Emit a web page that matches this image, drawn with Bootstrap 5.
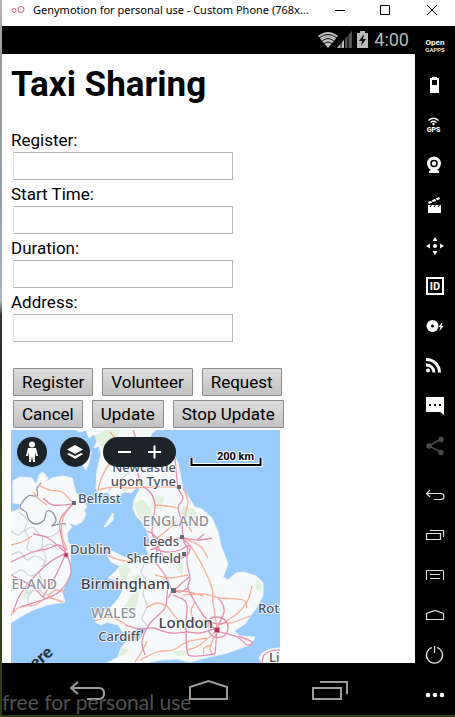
<!DOCTYPE html>
<html lang="en">
<head>
<meta charset="utf-8">
<meta name="viewport" content="width=device-width, initial-scale=1">
<title>Genymotion - Taxi Sharing</title>
<link href="https://cdn.jsdelivr.net/npm/bootstrap@5.3.0/dist/css/bootstrap.min.css" rel="stylesheet">
<style>
  body { font-family: Roboto, sans-serif; color: #000; background: linear-gradient(#b4b4b4 0, #999 8%, #8fa0ae 28%, #a9b6c2 42%, #333 44%, #222 58%, #3d4a18 64%, #2f3d12 100%); padding: 0 0 2px 2px; }
  svg { display: block; flex-shrink: 0; }
  .titlebar { height: 26px; font: 11px/20px "Noto Sans", sans-serif; padding-left: 9px; }
  .titlebar .caption { padding-left: 7px; }
  .plain { border: 0; padding: 0; background: transparent; color: inherit; }
  .winbtn { width: 46px; height: 20px; flex-shrink: 0; }
  .statusbar { height: 28px; padding-right: 6px; color: #b9b9b9; font-size: 18px; line-height: 28px; }
  .page { padding: 0 9px; }
  .page h1 { font-size: 35px; line-height: 40px; font-weight: 700; margin: 0; padding: 11px 0 23px; }
  .field label { display: block; font-size: 17px; line-height: 24px; }
  .field input { display: block; width: 220px; height: 28px; margin: 0 0 2px 2px; border: 1px solid #b5b5b5; border-left-color: #e4e4e4; border-radius: 0; padding: 2px 4px; font-size: 17px; }
  .actions { padding: 24px 0 2px 2px; row-gap: 4px; }
  .button-row { gap: 9px; }
  .actions button { height: 28px; padding: 0 8px; border: 1px solid #8c8c8c; border-radius: 1px; background: linear-gradient(#dedede, #c2c2c2); color: #000; font-size: 17px; line-height: 26px; }
  .map-box { width: 269px; }
  .map-tools { top: 7px; left: 6px; gap: 13px; }
  .map-tools button { height: 30px; }
  .map-tools > button, .zoomer { background: #1c2429; color: #fff; }
  .zoomer button { color: #fff; }
  .round { width: 30px; }
  .zoomer { width: 73px; padding: 0 6px; }
  .navbar-keys { height: 52px; }
  .navbar-keys button { width: 121px; height: 52px; }
  .toolbar-side { width: 40px; }
  .toolbar-side button { width: 40px; height: 40px; }
  .toolbar-side .upper { margin-bottom: 9px; margin-top: -1px; }
  .watermark { left: 2px; bottom: 2px; font: 21px/26px Lato, sans-serif; color: #5a5a5a; pointer-events: none; opacity: .9; }
</style>
<script src="https://cdn.jsdelivr.net/npm/bootstrap@5.3.0/dist/js/bootstrap.bundle.min.js"></script>
</head>
<body class="d-flex flex-column min-vh-100 position-relative">

<header class="titlebar bg-white d-flex align-items-start">
  <svg width="15" height="20" fill="none" stroke="#d4578b"><circle cx="3" cy="10.500" r="2"/><circle cx="10" cy="9.500" r="3"/></svg>
  <span class="caption text-nowrap flex-grow-1">Genymotion for personal use - Custom Phone (768x...</span>
  <button class="plain winbtn" aria-label="Minimize"><svg width="46" height="20" stroke="#000"><path d="M18 10.500h10"/></svg></button>
  <button class="plain winbtn" aria-label="Maximize"><svg width="46" height="20" fill="none" stroke="#000"><path d="M17.500 5.500h9v9h-9z"/></svg></button>
  <button class="plain winbtn" aria-label="Close"><svg width="46" height="20" stroke="#000"><path d="M18 5l10 10M28 5L18 15"/></svg></button>
</header>

<div class="d-flex flex-grow-1">
  <div class="d-flex flex-column flex-grow-1 bg-white">
    <div class="statusbar bg-black d-flex justify-content-end">
      <svg width="58" height="28" fill="none">
        <path d="M2 10Q12 2 22 10L12 22z" fill="#bbb"/>
        <path d="M3 12Q12 5 21 12M6 15Q12 10 18 15M8 18Q12 14 16 18" stroke="#111" stroke-width="1"/>
        <path d="M36 5V22H21z" fill="#555"/><path d="M28 14V22H21z" fill="#bbb"/><path d="M25 10v13M28.500 8v15M32 6v17" stroke="#000"/>
        <path d="M41 7h3V5h5v2h3v15H41z" fill="#bbb"/><path d="M48 8l-5 7h3l-1 5 5-7h-3z" fill="#111"/>
      </svg>
      <span>4:00</span>
    </div>

    <main class="page flex-grow-1">
      <h1>Taxi Sharing</h1>
      <form onsubmit="return false">
        <div class="field"><label for="reg">Register:</label><input id="reg" type="text"></div>
        <div class="field"><label for="start">Start Time:</label><input id="start" type="text"></div>
        <div class="field"><label for="dur">Duration:</label><input id="dur" type="text"></div>
        <div class="field"><label for="addr">Address:</label><input id="addr" type="text"></div>
        <div class="actions d-flex flex-column">
          <div class="button-row d-flex"><button>Register</button><button>Volunteer</button><button>Request</button></div>
          <div class="button-row d-flex"><button>Cancel</button><button>Update</button><button>Stop Update</button></div>
        </div>
      </form>
      <div class="map-box position-relative">
        <svg class="w-100" viewBox="11 430 269 233" role="img" aria-label="Map of England, Wales and Ireland">
          <path fill="#99ccfd" d="M11 430h269v233H11z"/>
          <g fill="#f7fafa" stroke="#eef3f6" stroke-width="1" stroke-linejoin="round">
            <path d="M11 512L18 510 21 504 13 503 13 481 20 477 32 478 36 485 39 475 43 472 48 478 46 482 52 478 63 476 72 478 76 493 82 498 87 507 84 510 86 514 82 522 76 525 69 523 72 527 67 533 68 542 72 546 70 555 71 572 62 592 65 602 47 605 33 610 20 617 11 623z"/>
            <path d="M86 430L89 438 94 434 97 441 94 448 99 446 101 455 97 470 96 488 99 494 107 492 112 497 118 496 124 492 131 493 137 487 140 489 134 500 133 508 136 516 142 522 147 531 150 541 146 548 149 555 140 556 132 560 122 556 112 551 107 555 111 562 120 566 115 572 108 578 120 581 123 590 118 599 112 606 97 616 95 622 101 625 107 622 118 625 123 632 132 632 140 627 147 628 141 638 133 642 126 642 121 648 118 657 107 663 145 663 160 660 177 659 190 662 205 658 227 653 241 648 250 645 255 637 240 636 234 631 245 624 251 615 258 606 263 595 263 583 256 576 243 572 236 573 228 580 223 577 228 564 221 546 218 532 212 518 202 509 195 507 183 489 178 463 174 455 163 447 150 438 152 433 156 430z"/>
            <path d="M104 527L109 519 113 513 113 520 107 526zM280 648L270 649 262 653 259 658 262 663H280zM83 466L86 457 91 452 89 462 86 470zM76 430L80 432 86 430z"/>
          </g>
          <g fill="#d9edd3" opacity=".75">
            <path d="M94 436l12-6 14 0-4 10-8 3-5 6zM134 504l8-5 9 9 2 14-6 2-8-6zM152 495l12 2-3 12-10-1zM183 506l10 3 8 8-12 2-9-6zM118 567l8-4 5 7-5 8 2 10-6-4zM131 596l8-5-2 15-9 8-7 2 3-9zM121 648l8 1-4 6-6 1zM256 579l5 5 0 8-5-4zM136 574l5 3-3 7-5-2zM172 652l10-2 8 3-12 3zM26 588l5 3-4 8-5-2zM120 490l8-2-2 5zM178 560l6 4-2 12-5-6z"/>
          </g>
          <g fill="none" stroke="#cdd0d6" stroke-width="1.100" data-lines="11 531,18 535,24 531,29 539,27 548,34 552,43 547,50 544,57 548|11 555,20 552,27 560,35 556,45 562,40 571,30 576,22 570,12 575|24 531,33 527,40 535,52 536,60 530|19 512,27 520,24 531|42 547,46 560,41 567|43 535,42 547|11 590,23 587,29 594,37 588,46 595,56 589|31 590,28 603,40 601|39 572,42 584,38 592|57 573,52 583,56 590|142 552,145 562,141 572,146 581,143 593,147 606,142 618,148 626|108 491,118 482,126 475,142 464,150 450|138 577,144 582,142 586"></g>
          <g fill="none" stroke="#94959c" stroke-width="1.300" data-lines="41 483,37 488,37 496,28 496,20 507,26 512,29 520,36 524,44 520,47 511,53 513,56 521,52 526,59 524,66 524"></g>
          <g fill="none" stroke="#f9ae96" stroke-width="1.300" data-lines="38 485,50 490,62 492,72 502|33 492,40 500,47 505|73 503,63 518,62 535,67 550|11 615,20 607,35 605,47 598,63 602|47 598,55 590,65 592|98 490,102 477,110 463,122 452|98 490,113 487,130 488,150 487,178 487|155 505,166 506,178 508|183 488,188 502,185 518,192 532|190 545,202 565,212 588,213 602,217 628|183 595,203 594,220 598,243 600,247 608|252 586,248 600,238 613,220 625|140 660,157 652,173 650,187 642,207 638|212 654,210 647,216 634|187 650,200 645,217 630|107 555,120 560,135 561,150 556|155 575,170 578,188 575|173 590,189 592,203 596|95 621,110 617,125 624|146 608,157 603,167 606|195 602,191 612,197 625|186 626,178 620,167 606|176 522,165 532,154 540|204 654,204 648,212 645|183 538,200 546,208 558|250 616,240 620,228 624|135 662,141 653,147 641|112 463,118 452,116 440,110 432|11 545,22 542,32 536"></g>
          <g fill="none" stroke="#e58fb0" stroke-width="1.300" data-lines="43 498,53 505,73 504|67 550,58 545,47 549,33 552,11 562|66 553,50 562,33 578,20 595,13 612|66 553,56 575,43 597|67 554,71 573,60 591,45 599,20 607|11 575,30 585,45 599|66 553,62 540,60 520,72 505|66 553,48 538,33 534|188 545,187 562,190 578,188 588,195 602,203 615,214 628|168 580,173 590,183 582,189 577|155 562,165 575,168 583,167 595,165 608,153 620,147 628,142 642,145 655|173 595,184 600,187 607,186 625,187 650,192 656,215 654|125 625,140 629,153 628,170 633,187 632,200 633,214 629|220 632,237 637,247 645,252 642,238 636|217 628,224 612,222 603,218 598|217 630,216 642,215 654|140 485,150 492,155 505,152 532,157 545,155 562|175 458,178 487,183 498,178 508,182 522,183 538,188 550|153 542,168 540,182 538,197 540,212 538|153 548,166 552,180 550,188 545|157 545,165 558,177 560,187 555|182 538,190 546,188 555|197 540,204 534|147 531,154 535,160 545,150 550|122 452,133 462,138 474,140 485|133 430,136 442,129 452,117 450|208 628,209 620,216 617,225 620,228 628,224 636,214 637,208 630|208 622,219 624,227 622|188 588,180 592,173 590|173 590,168 598|262 663,264 655,271 651,280 650|150 440,146 454,148 468"></g>
          <g fill="#646977"><path d="M72 501h4v4h-4zM177 485h4v4h-4zM180 535h4v4h-4zM182 552h4v4h-4zM171 588h5v5h-5zM140 630h3v3h-3z"/></g>
          <path fill="#b42d58" stroke="#d789a2" d="M64 553h4v4h-4zM214.500 627.500h5v5h-5z"/>
          <g font-family="'Noto Sans', sans-serif" font-size="13" font-weight="500" fill="#4d535f" stroke="#fff" stroke-opacity=".75" stroke-width="2" paint-order="stroke" stroke-linejoin="round">
            <text x="176" y="472" text-anchor="end">Newcastle</text>
            <text x="176" y="486" text-anchor="end">upon Tyne</text>
            <text x="78" y="503">Belfast</text>
            <text x="179" y="546" text-anchor="end">Leeds</text>
            <text x="181" y="563" text-anchor="end">Sheffield</text>
            <text x="70" y="554">Dublin</text>
            <text x="140" y="641" text-anchor="end">Cardiff</text>
            <text x="258" y="613">Rot</text>
            <text x="269" y="662">Li</text>
            <g font-size="15" fill="#3e444f"><text x="170" y="589" text-anchor="end">Birmingham</text><text x="213" y="628" text-anchor="end">London</text></g>
            <g font-size="14" fill="#8d929a"><text x="209" y="526" text-anchor="end">ENGLAND</text><text x="57" y="589" text-anchor="end">ELAND</text><text x="136" y="618" text-anchor="end">WALES</text></g>
          </g>
          <text transform="translate(54 654) rotate(-40)" text-anchor="end" font-family="Lato, sans-serif" font-weight="900" font-size="17" fill="#26323c">here</text>
          <path d="M191.500 458v7h69v-7" fill="none" stroke="#fff" stroke-width="4"/>
          <path d="M191.500 458v7h69v-7" fill="none" stroke="#000" stroke-width="2"/>
          <text x="254" y="460" text-anchor="end" font-size="11" font-weight="700" stroke="#fff" stroke-width="2" paint-order="stroke">200 km</text>
        </svg>
        <div class="map-tools position-absolute d-flex">
          <button class="plain round rounded-circle" aria-label="Street level"><svg width="30" height="30" fill="#fff"><circle cx="15" cy="7.500" r="3"/><path d="M11 11h8l2 8h-2l-1-4v10h-2l-1-6-1 6h-2V15l-1 4H9z"/></svg></button>
          <button class="plain round rounded-circle" aria-label="Map layers"><svg width="30" height="30" fill="#fff"><path d="M15 8l8 4.500-8 4.500-8-4.500zM7 17l2-1 6 3 6-3 2 1-8 5z"/></svg></button>
          <div class="zoomer rounded-pill d-flex">
            <button class="plain round" aria-label="Zoom out"><svg width="30" height="30" stroke="#fff" stroke-width="2"><path d="M9 15h13"/></svg></button>
            <button class="plain round" aria-label="Zoom in"><svg width="30" height="30" stroke="#fff" stroke-width="2"><path d="M9 15h13M15.500 8.500v13"/></svg></button>
          </div>
        </div>
      </div>
    </main>

    <nav class="navbar-keys bg-black d-flex justify-content-center" aria-label="Device keys">
      <button class="plain" aria-label="Back"><svg width="121" height="52" fill="none" stroke="#9c9c9c" stroke-width="2"><path d="M51 19l-7 6 7 6M45 25h27q5 0 5 5.500t-5 5.500H60"/></svg></button>
      <button class="plain" aria-label="Home"><svg width="121" height="52" fill="none" stroke="#9c9c9c" stroke-width="2"><path d="M42 36V24l18.500-6L79 24v12z"/></svg></button>
      <button class="plain" aria-label="Recent apps"><svg width="121" height="52" fill="none" stroke="#9c9c9c" stroke-width="2"><path d="M44 25h28v11H44zM51 19h27v12"/></svg></button>
    </nav>
  </div>

  <aside class="toolbar-side bg-black text-white d-flex flex-column flex-shrink-0">
    <div class="upper d-flex flex-column">
      <button class="plain" aria-label="Open GApps"><svg width="40" height="40" fill="#fff" font-family="Roboto, sans-serif" text-anchor="middle"><text x="20" y="20" font-size="8" font-weight="700">Open</text><text x="20" y="27" font-size="6" font-weight="500">GAPPS</text></svg></button>
      <button class="plain" aria-label="Battery"><svg width="40" height="40" fill="#fff"><path fill-rule="evenodd" d="M15 13h2v-1h5v1h2v15h-9zM17 15v5h5v-5z"/></svg></button>
      <button class="plain" aria-label="GPS"><svg width="40" height="40" fill="none" stroke="#fff" stroke-width="1.300"><path d="M13.500 15.500q5-4.500 10 0M15.500 17.500q3-2.500 6 0"/><circle cx="18.500" cy="19" r=".6"/><text x="18.500" y="27" text-anchor="middle" stroke="none" fill="#fff" font-family="Roboto, sans-serif" font-size="7" font-weight="900">GPS</text></svg></button>
      <button class="plain" aria-label="Camera"><svg width="40" height="40"><circle cx="19" cy="18.500" r="7" fill="#fff"/><circle cx="19" cy="18.500" r="3" fill="none" stroke="#000" stroke-width="1.500"/><path fill="#fff" d="M14 26l3-2h4l3 2v2H14z"/></svg></button>
      <button class="plain" aria-label="Screencast"><svg width="40" height="40"><path fill="#fff" d="M13 20h13v8H13zM13 17l11-5 1 2-11 5z"/><path stroke="#000" d="M16 15l2 3M20 13l2 3M15 22l2-3M19 22l2-3M23 22l2-3"/></svg></button>
      <button class="plain" aria-label="Move"><svg width="40" height="40" fill="#fff"><circle cx="20" cy="21" r="2"/><path d="M20 12l2.500 4h-5zM20 30l2.500-4h-5zM11 21l4-2.500v5zM29 21l-4-2.500v5z"/></svg></button>
      <button class="plain" aria-label="Identifiers"><svg width="40" height="40"><path d="M12 13h16v16H12z" fill="none" stroke="#fff" stroke-width="2"/><text x="20" y="25" font-family="Roboto, sans-serif" font-size="11" font-weight="700" fill="#fff" text-anchor="middle">ID</text></svg></button>
      <button class="plain" aria-label="Disk IO"><svg width="40" height="40" fill="#fff"><circle cx="17.500" cy="21" r="6"/><circle cx="17.500" cy="21" r="1.500" fill="#000"/><path d="M27.500 17l-4 5h2l-1 4 4-5h-2z"/></svg></button>
      <button class="plain" aria-label="Network"><svg width="40" height="40" fill="none" stroke="#fff" stroke-width="3"><path d="M11 14.500a13 13 0 0 1 13.500 13M11 20a7.500 7.500 0 0 1 8 7.500"/><circle cx="13" cy="25.500" r="2" fill="#fff" stroke="none"/></svg></button>
      <button class="plain" aria-label="Phone messages"><svg width="40" height="40"><path fill="#fff" d="M11 12h18v18l-4-3H11z"/><path fill="#000" d="M14 19h2v2h-2zM19 19h2v2h-2zM24 19h2v2h-2z"/></svg></button>
      <button class="plain" aria-label="Share"><svg width="40" height="40" fill="#4b4b4b" stroke="#4b4b4b" stroke-width="1.500"><path fill="none" d="M26 14l-12 7 12 6"/><circle cx="26" cy="14.500" r="2"/><circle cx="14" cy="21" r="2"/><circle cx="26" cy="27.500" r="2"/></svg></button>
    </div>
    <button class="plain" aria-label="Back key"><svg width="40" height="40" fill="none" stroke="#ddd" stroke-width="1.200"><path d="M15 16l-3.500 3.500L15 23M12 19.500h14q3 0 3 3t-3 3h-7"/></svg></button>
    <button class="plain" aria-label="Recent key"><svg width="40" height="40" fill="none" stroke="#ddd" stroke-width="1.200"><path d="M11.500 19.500h14v6h-14zM15 16.500h13.500V23"/></svg></button>
    <button class="plain" aria-label="Menu key"><svg width="40" height="40" fill="none" stroke="#ddd"><path d="M11.500 26v-9.500h17V26M15 20.500h10M15 24.500h10"/></svg></button>
    <button class="plain" aria-label="Home key"><svg width="40" height="40" fill="none" stroke="#ddd" stroke-width="1.200"><path d="M11.500 25.500v-6l8.500-3 8.500 3v6z"/></svg></button>
    <button class="plain" aria-label="Power"><svg width="40" height="40" fill="none" stroke="#ddd" stroke-width="1.300"><path d="M17 13.500a8 8 0 1 0 5 0M19.500 12v7"/></svg></button>
    <button class="plain" aria-label="More"><svg width="40" height="40" fill="#fff"><circle cx="13" cy="21" r="2.300"/><circle cx="20" cy="21" r="2.300"/><circle cx="27" cy="21" r="2.300"/></svg></button>
  </aside>
</div>
<div class="watermark position-absolute text-nowrap">free for personal use</div>
<script>
  // Draw each list of map points as a smooth line.
  document.querySelectorAll('[data-lines]').forEach(function (group) {
    var d = group.dataset.lines.split('|').map(function (line) {
      var p = line.split(',').map(function (s) { return s.split(' ').map(Number); });
      var out = 'M' + p[0];
      for (var i = 0; i < p.length - 1; i++) {
        var a = p[i - 1] || p[i], b = p[i], c = p[i + 1], e = p[i + 2] || c;
        out += 'C' + [b[0] + (c[0] - a[0]) / 6, b[1] + (c[1] - a[1]) / 6, c[0] - (e[0] - b[0]) / 6, c[1] - (e[1] - b[1]) / 6, c[0], c[1]];
      }
      return out;
    }).join('');
    var path = document.createElementNS('http://www.w3.org/2000/svg', 'path');
    path.setAttribute('d', d);
    group.appendChild(path);
  });
</script>
</body>
</html>
